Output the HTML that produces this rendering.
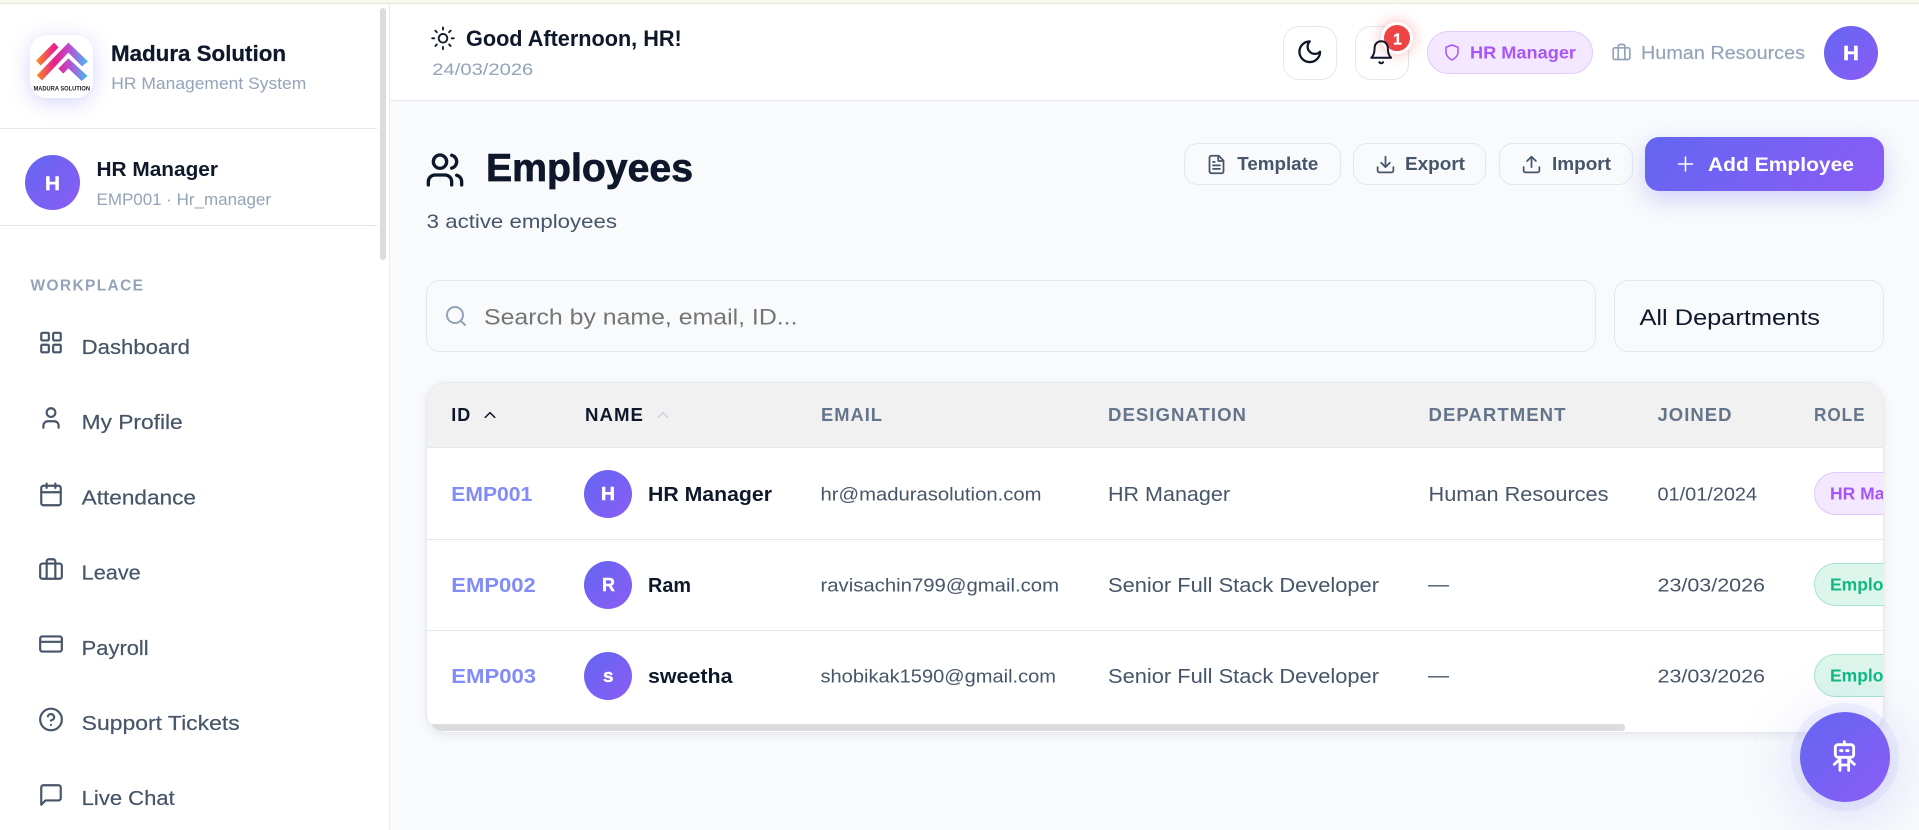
<!DOCTYPE html>
<html lang="en"><head><meta charset="utf-8"><title>Employees</title>
<style>
*{box-sizing:border-box;margin:0;padding:0}
html,body{width:1919px;height:830px;overflow:hidden;background:#f8fafc}
body{position:relative;font-family:"Liberation Sans",sans-serif}
.a{position:absolute}
.g{background:linear-gradient(135deg,#6366f1,#8b5cf6)}
.btn{position:absolute;border:1.25px solid #e2e8f0;border-radius:14px;background:#f8fafc;top:143px;height:42px}
svg.o{position:absolute;left:0;top:0}
text{font-family:"Liberation Sans",sans-serif;white-space:pre}
.b{font-weight:700}
.ic{fill:none;stroke-width:2;stroke-linecap:round;stroke-linejoin:round}
</style></head><body>
<div class="a" style="left:0;top:0;width:1919px;height:4px;background:#f6f8ee;border-bottom:1px solid #e6ead6"></div>
<div class="a" style="left:0;top:4px;width:390px;height:826px;background:#fff;border-right:1.25px solid #e7ecf3"></div>
<div class="a" style="left:380px;top:8px;width:6px;height:252px;background:#dcdcdc;border-radius:3px"></div>
<div class="a" style="left:0;top:128px;width:377px;height:1px;background:#e2e8f0"></div>
<div class="a" style="left:0;top:225px;width:377px;height:1px;background:#e2e8f0"></div>
<div class="a" style="left:30px;top:35px;width:63px;height:63px;border-radius:17px;background:#fff;box-shadow:0 4px 20px rgba(99,102,241,.28)"></div>
<div class="a g" style="left:25px;top:155px;width:55px;height:55px;border-radius:50%"></div>
<div class="a" style="left:390px;top:4px;width:1529px;height:97px;background:#fff;border-bottom:1.25px solid #e2e8f0"></div>
<div class="a" style="left:1283px;top:26px;width:54px;height:54px;border-radius:16px;background:#fff;border:1.25px solid #e5e7eb"></div>
<div class="a" style="left:1355px;top:26px;width:54px;height:54px;border-radius:16px;background:#fff;border:1.25px solid #e5e7eb"></div>
<div class="a" style="left:1427px;top:31px;width:166px;height:43px;border-radius:22px;background:#f3e8ff;border:1.25px solid #e2c9fb"></div>
<div class="a g" style="left:1824px;top:26px;width:54px;height:54px;border-radius:50%"></div>
<div class="a" style="left:1381px;top:22px;width:32px;height:32px;border-radius:50%;background:#ef4444;border:3px solid #fff;box-shadow:0 0 14px rgba(239,68,68,.4)"></div>
<div class="btn" style="left:1184px;width:157px"></div>
<div class="btn" style="left:1353px;width:133px"></div>
<div class="btn" style="left:1499px;width:134px"></div>
<div class="a g" style="left:1645px;top:137px;width:239px;height:54px;border-radius:14px;background:linear-gradient(135deg,#6366f1,#8b5cf6);box-shadow:0 8px 24px rgba(99,102,241,.28)"></div>
<div class="a" style="left:426px;top:280px;width:1170px;height:72px;border-radius:14px;border:1.25px solid #e2e8f0;background:#f8fafc"></div>
<div class="a" style="left:1614px;top:280px;width:270px;height:72px;border-radius:14px;border:1.25px solid #e2e8f0;background:#f8fafc"></div>
<div class="a" style="left:426px;top:382px;width:1458px;height:351px;border-radius:20px;box-shadow:0 2px 10px rgba(15,23,42,.08)"></div>
<div class="a" style="left:426px;top:382px;width:1458px;height:351px;border-radius:20px;overflow:hidden;background:#fff;border:1.25px solid #e6eaf0">
  <div class="a" style="left:0;top:0;width:1458px;height:65px;background:#f1f1f1;border-bottom:1.25px solid #e2e8f0"></div>
  <div class="a" style="left:0;top:156px;width:1458px;height:1.25px;background:#e2e8f0"></div>
  <div class="a" style="left:0;top:247px;width:1458px;height:1.25px;background:#e2e8f0"></div>
  <div class="a" style="left:3px;top:340.5px;width:1195px;height:7px;background:#dcdcdc;border-radius:3px"></div>
</div>
<div class="a g" style="left:584px;top:470px;width:48px;height:48px;border-radius:50%"></div>
<div class="a g" style="left:584px;top:561px;width:48px;height:48px;border-radius:50%"></div>
<div class="a g" style="left:584px;top:652px;width:48px;height:48px;border-radius:50%"></div>
<div class="a" style="left:1814px;top:472px;width:120px;height:43px;border-radius:22px;background:#f3e8ff;border:1.25px solid #e2c9fb;clip-path:inset(-2px 50px -2px -2px)"></div>
<div class="a" style="left:1814px;top:563px;width:120px;height:43px;border-radius:22px;background:#dcf6ec;border:1.25px solid #a7e6cc;clip-path:inset(-2px 50px -2px -2px)"></div>
<div class="a" style="left:1814px;top:654px;width:120px;height:43px;border-radius:22px;background:#dcf6ec;border:1.25px solid #a7e6cc;clip-path:inset(-2px 50px -2px -2px)"></div>

<svg class="o" width="1919" height="830" viewBox="0 0 1919 830" xmlns="http://www.w3.org/2000/svg">
<defs>
<linearGradient id="lg" gradientUnits="userSpaceOnUse" x1="108" y1="0" x2="265" y2="0"><stop offset="0" stop-color="#f7941d"/><stop offset=".35" stop-color="#e91e8c"/><stop offset=".65" stop-color="#b84fd1"/><stop offset="1" stop-color="#3fc1f5"/></linearGradient>
<clipPath id="tc"><rect x="426" y="382" width="1457" height="351"/></clipPath>
</defs>
<!-- logo -->
<g transform="scale(.3333)" fill="url(#lg)">
<path d="M108 182L162 128L176 142L122 197Z"/>
<path d="M110 226L205 128L264 184L246 199L205 158L126 241Z"/>
<path d="M175 206L205 175L263 228L245 243L205 205L190 221Z"/>
</g>
<text x="33.5" y="90.5" font-size="6.5" class="b" fill="#222" textLength="56.5" lengthAdjust="spacingAndGlyphs">MADURA SOLUTION</text>

<!-- sidebar text -->
<text x="111" y="61" font-size="22" class="b" fill="#0f172a" stroke="#0f172a" stroke-width=".25" textLength="175" lengthAdjust="spacingAndGlyphs">Madura Solution</text>
<text x="111.3" y="89" font-size="16.5" fill="#94a3b8" textLength="195" lengthAdjust="spacingAndGlyphs">HR Management System</text>
<text x="45" y="190" font-size="19" class="b" fill="#fff" stroke="#fff" stroke-width=".4" textLength="15" lengthAdjust="spacingAndGlyphs">H</text>
<text x="96.5" y="176" font-size="20" class="b" fill="#0f172a" textLength="121.5" lengthAdjust="spacingAndGlyphs">HR Manager</text>
<text x="96.5" y="205" font-size="16.3" fill="#94a3b8" textLength="174.5" lengthAdjust="spacingAndGlyphs">EMP001 · Hr_manager</text>
<text x="30.5" y="290.5" font-size="15.5" class="b" fill="#94a3b8" textLength="112.5" lengthAdjust="spacing">WORKPLACE</text>
<g font-size="20.5" fill="#475569" stroke="#475569" stroke-width=".2">
<text x="81.7" y="354" textLength="108.3" lengthAdjust="spacingAndGlyphs">Dashboard</text>
<text x="81.7" y="429.2" textLength="101" lengthAdjust="spacingAndGlyphs">My Profile</text>
<text x="81.7" y="504.4" textLength="114.3" lengthAdjust="spacingAndGlyphs">Attendance</text>
<text x="81.7" y="579.6" textLength="59" lengthAdjust="spacingAndGlyphs">Leave</text>
<text x="81.7" y="654.8" textLength="67" lengthAdjust="spacingAndGlyphs">Payroll</text>
<text x="81.7" y="730" textLength="158" lengthAdjust="spacingAndGlyphs">Support Tickets</text>
<text x="81.7" y="805.2" textLength="93" lengthAdjust="spacingAndGlyphs">Live Chat</text>
</g>
<!-- sidebar icons -->
<g class="ic" stroke="#475569">
<svg x="38" y="329.6" width="26" height="26" viewBox="0 0 24 24"><rect x="3" y="3" width="7" height="7" rx="1"/><rect x="14" y="3" width="7" height="7" rx="1"/><rect x="14" y="14" width="7" height="7" rx="1"/><rect x="3" y="14" width="7" height="7" rx="1"/></svg>
<svg x="38" y="405" width="26" height="26" viewBox="0 0 24 24"><path d="M19 21v-2a4 4 0 0 0-4-4H9a4 4 0 0 0-4 4v2"/><circle cx="12" cy="7" r="4"/></svg>
<svg x="38" y="481.4" width="26" height="26" viewBox="0 0 24 24"><rect x="3" y="4" width="18" height="18" rx="2"/><path d="M16 2v4M8 2v4M3 10h18"/></svg>
<svg x="38" y="556" width="26" height="26" viewBox="0 0 24 24"><rect x="2" y="7" width="20" height="14" rx="2"/><path d="M16 21V5a2 2 0 0 0-2-2h-4a2 2 0 0 0-2 2v16"/></svg>
<svg x="38" y="631" width="26" height="26" viewBox="0 0 24 24"><rect x="2" y="5" width="20" height="14" rx="2"/><path d="M2 10h20"/></svg>
<svg x="38" y="706.5" width="26" height="26" viewBox="0 0 24 24"><circle cx="12" cy="12" r="10"/><path d="M9.09 9a3 3 0 0 1 5.83 1c0 2-3 3-3 3M12 17h.01"/></svg>
<svg x="38" y="782" width="26" height="26" viewBox="0 0 24 24"><path d="M21 15a2 2 0 0 1-2 2H7l-4 4V5a2 2 0 0 1 2-2h14a2 2 0 0 1 2 2z"/></svg>
</g>

<!-- header -->
<svg x="430" y="25.3" width="26" height="26" viewBox="0 0 24 24" class="ic" stroke="#0f172a" style="stroke-width:1.7"><circle cx="12" cy="12" r="4"/><path d="M12 2v2M12 20v2M4.93 4.93l1.41 1.41M17.66 17.66l1.41 1.41M2 12h2M20 12h2M6.34 17.66l-1.41 1.41M19.07 4.93l-1.41 1.41"/></svg>
<text x="466" y="46" font-size="21.9" class="b" fill="#0f172a" textLength="215.7" lengthAdjust="spacingAndGlyphs">Good Afternoon, HR!</text>
<text x="432.3" y="74.8" font-size="17" fill="#94a3b8" textLength="101" lengthAdjust="spacingAndGlyphs">24/03/2026</text>
<svg x="1296" y="38" width="27.5" height="27.5" viewBox="0 0 24 24" class="ic" stroke="#0f172a"><path d="M12 3a6 6 0 0 0 9 9 9 9 0 1 1-9-9Z"/></svg>
<svg x="1368" y="39" width="26.4" height="26.4" viewBox="0 0 24 24" class="ic" stroke="#0f172a" style="stroke-width:1.8"><path d="M6 8a6 6 0 0 1 12 0c0 7 3 9 3 9H3s3-2 3-9M10.3 21a1.94 1.94 0 0 0 3.4 0"/></svg>
<text x="1397.5" y="44.5" font-size="16" class="b" fill="#fff" stroke="#fff" stroke-width=".3" text-anchor="middle">1</text>
<svg x="1443" y="43.5" width="18" height="18" viewBox="0 0 24 24" class="ic" stroke="#a855f7"><path d="M12 22s8-4 8-10V5l-8-3-8 3v7c0 6 8 10 8 10z"/></svg>
<text x="1470" y="58.5" font-size="17.5" class="b" fill="#a855f7" textLength="106" lengthAdjust="spacingAndGlyphs">HR Manager</text>
<svg x="1611.5" y="42" width="20" height="20" viewBox="0 0 24 24" class="ic" stroke="#94a3b8"><rect x="2" y="7" width="20" height="14" rx="2"/><path d="M16 21V5a2 2 0 0 0-2-2h-4a2 2 0 0 0-2 2v16"/></svg>
<text x="1641" y="59" font-size="18.5" fill="#94a3b8" stroke="#94a3b8" stroke-width=".15" textLength="164" lengthAdjust="spacingAndGlyphs">Human Resources</text>
<text x="1843" y="60" font-size="20.5" class="b" fill="#fff" stroke="#fff" stroke-width=".4" textLength="16" lengthAdjust="spacingAndGlyphs">H</text>

<!-- page title -->
<svg x="425" y="150" width="40" height="40" viewBox="0 0 24 24" class="ic" stroke="#0f172a"><path d="M16 21v-2a4 4 0 0 0-4-4H6a4 4 0 0 0-4 4v2"/><circle cx="9" cy="7" r="4"/><path d="M22 21v-2a4 4 0 0 0-3-3.87M16 3.13a4 4 0 0 1 0 7.75"/></svg>
<text x="486" y="181" font-size="38.5" class="b" fill="#0f172a" stroke="#0f172a" stroke-width=".7" textLength="207" lengthAdjust="spacingAndGlyphs">Employees</text>
<text x="426.7" y="228" font-size="19.5" fill="#475569" textLength="190.3" lengthAdjust="spacingAndGlyphs">3 active employees</text>

<!-- buttons -->
<g class="ic" stroke="#475569" style="stroke-width:2">
<svg x="1206" y="154" width="21" height="21" viewBox="0 0 24 24"><path d="M14.5 2H6a2 2 0 0 0-2 2v16a2 2 0 0 0 2 2h12a2 2 0 0 0 2-2V7.5L14.5 2z"/><path d="M14 2v6h6M16 13H8M16 17H8M10 9H8"/></svg>
<svg x="1375" y="154" width="21" height="21" viewBox="0 0 24 24"><path d="M21 15v4a2 2 0 0 1-2 2H5a2 2 0 0 1-2-2v-4M7 10l5 5 5-5M12 15V3"/></svg>
<svg x="1521" y="154" width="21" height="21" viewBox="0 0 24 24"><path d="M21 15v4a2 2 0 0 1-2 2H5a2 2 0 0 1-2-2v-4M17 8l-5-5-5 5M12 3v12"/></svg>
</g>
<g font-size="18.5" class="b" fill="#475569">
<text x="1237.3" y="170" textLength="81" lengthAdjust="spacingAndGlyphs">Template</text>
<text x="1405" y="170" textLength="60" lengthAdjust="spacingAndGlyphs">Export</text>
<text x="1552" y="170" textLength="59" lengthAdjust="spacingAndGlyphs">Import</text>
</g>
<svg x="1673.5" y="152" width="24" height="24" viewBox="0 0 24 24" class="ic" stroke="#fff" style="stroke-width:1.6"><path d="M12 5v14M5 12h14"/></svg>
<text x="1708" y="171" font-size="19.5" class="b" fill="#fff" textLength="146" lengthAdjust="spacingAndGlyphs">Add Employee</text>

<!-- filters -->
<svg x="444" y="304" width="24" height="24" viewBox="0 0 24 24" class="ic" stroke="#94a3b8"><circle cx="11" cy="11" r="8"/><path d="M21 21l-4.35-4.35"/></svg>
<text x="484" y="324.5" font-size="22.5" fill="#757575" textLength="313.5" lengthAdjust="spacingAndGlyphs">Search by name, email, ID...</text>
<text x="1639.5" y="324.8" font-size="22.5" fill="#0f172a" textLength="180.5" lengthAdjust="spacingAndGlyphs">All Departments</text>

<!-- table head -->
<g font-size="18" class="b" letter-spacing="1">
<text x="451.3" y="421" fill="#0f172a" textLength="20" lengthAdjust="spacingAndGlyphs">ID</text>
<text x="585" y="421" fill="#0f172a" textLength="59" lengthAdjust="spacingAndGlyphs">NAME</text>
<g fill="#64748b">
<text x="821" y="421" textLength="62" lengthAdjust="spacingAndGlyphs">EMAIL</text>
<text x="1108" y="421" textLength="139" lengthAdjust="spacingAndGlyphs">DESIGNATION</text>
<text x="1428.5" y="421" textLength="138" lengthAdjust="spacingAndGlyphs">DEPARTMENT</text>
<text x="1657.5" y="421" textLength="75" lengthAdjust="spacingAndGlyphs">JOINED</text>
<text x="1814" y="421" textLength="51.5" lengthAdjust="spacingAndGlyphs">ROLE</text>
</g></g>
<svg x="480.5" y="405.5" width="19" height="19" viewBox="0 0 24 24" class="ic" stroke="#0f172a"><path d="M18 15l-6-6-6 6"/></svg>
<svg x="653.5" y="405.5" width="19" height="19" viewBox="0 0 24 24" class="ic" stroke="#cbd5e1"><path d="M18 15l-6-6-6 6"/></svg>

<!-- rows -->
<g font-size="20" class="b" fill="#818cf8">
<text x="451.3" y="501" textLength="81" lengthAdjust="spacingAndGlyphs">EMP001</text>
<text x="451.3" y="592" textLength="84.5" lengthAdjust="spacingAndGlyphs">EMP002</text>
<text x="451.3" y="683" textLength="84.8" lengthAdjust="spacingAndGlyphs">EMP003</text>
</g>
<g font-size="18.5" class="b" fill="#fff" stroke="#fff" stroke-width=".4">
<text x="601" y="500" textLength="14" lengthAdjust="spacingAndGlyphs">H</text>
<text x="602" y="591" textLength="13" lengthAdjust="spacingAndGlyphs">R</text>
<text x="603" y="682" textLength="10.5" lengthAdjust="spacingAndGlyphs">s</text>
</g>
<g font-size="20" class="b" fill="#0f172a">
<text x="648" y="501" textLength="124" lengthAdjust="spacingAndGlyphs">HR Manager</text>
<text x="648" y="592" textLength="43" lengthAdjust="spacingAndGlyphs">Ram</text>
<text x="648" y="683" textLength="84.5" lengthAdjust="spacingAndGlyphs">sweetha</text>
</g>
<g font-size="18.5" fill="#475569">
<text x="820.5" y="500.5" textLength="221" lengthAdjust="spacingAndGlyphs">hr@madurasolution.com</text>
<text x="820.5" y="591.5" textLength="238.5" lengthAdjust="spacingAndGlyphs">ravisachin799@gmail.com</text>
<text x="820.5" y="682.5" textLength="235.5" lengthAdjust="spacingAndGlyphs">shobikak1590@gmail.com</text>
<text x="1657.5" y="500.7" textLength="99.5" lengthAdjust="spacingAndGlyphs">01/01/2024</text>
<text x="1657.5" y="591.7" textLength="107.5" lengthAdjust="spacingAndGlyphs">23/03/2026</text>
<text x="1657.5" y="682.7" textLength="107.5" lengthAdjust="spacingAndGlyphs">23/03/2026</text>
</g>
<g font-size="20" fill="#475569">
<text x="1108" y="500.8" textLength="122" lengthAdjust="spacingAndGlyphs">HR Manager</text>
<text x="1108" y="591.8" textLength="271" lengthAdjust="spacingAndGlyphs">Senior Full Stack Developer</text>
<text x="1108" y="682.8" textLength="271" lengthAdjust="spacingAndGlyphs">Senior Full Stack Developer</text>
<text x="1428.5" y="501.2" textLength="180" lengthAdjust="spacingAndGlyphs">Human Resources</text>
</g>
<g font-size="21" fill="#475569">
<text x="1428" y="591">—</text>
<text x="1428" y="682">—</text>
</g>
<g clip-path="url(#tc)" font-size="17.5" class="b">
<text x="1830" y="499.5" fill="#a855f7">HR Manager</text>
<text x="1830" y="590.5" fill="#10b981">Employee</text>
<text x="1830" y="681.5" fill="#10b981">Employee</text>
</g>
</svg>

<!-- floating button -->
<div class="a g" style="left:1800px;top:712px;width:90px;height:90px;border-radius:50%;box-shadow:0 0 0 9px rgba(99,102,241,.07),0 8px 60px rgba(99,102,241,.26);z-index:3"></div>
<svg class="o" width="1919" height="830" viewBox="0 0 1919 830" style="z-index:4;pointer-events:none">
<g transform="translate(1810 725) scale(.3333)" fill="none" stroke="#fff" stroke-width="8.5" stroke-linecap="round" stroke-linejoin="round">
<rect x="76" y="59" width="55" height="38" rx="8"/>
<path d="M103 50V59M90 97V136M116 97V136M90 120H116M90 102L73 118M116 102L133 118"/>
<path d="M92 77h4M110 77h4" stroke-width="9"/>
</g></svg>
</body></html>
